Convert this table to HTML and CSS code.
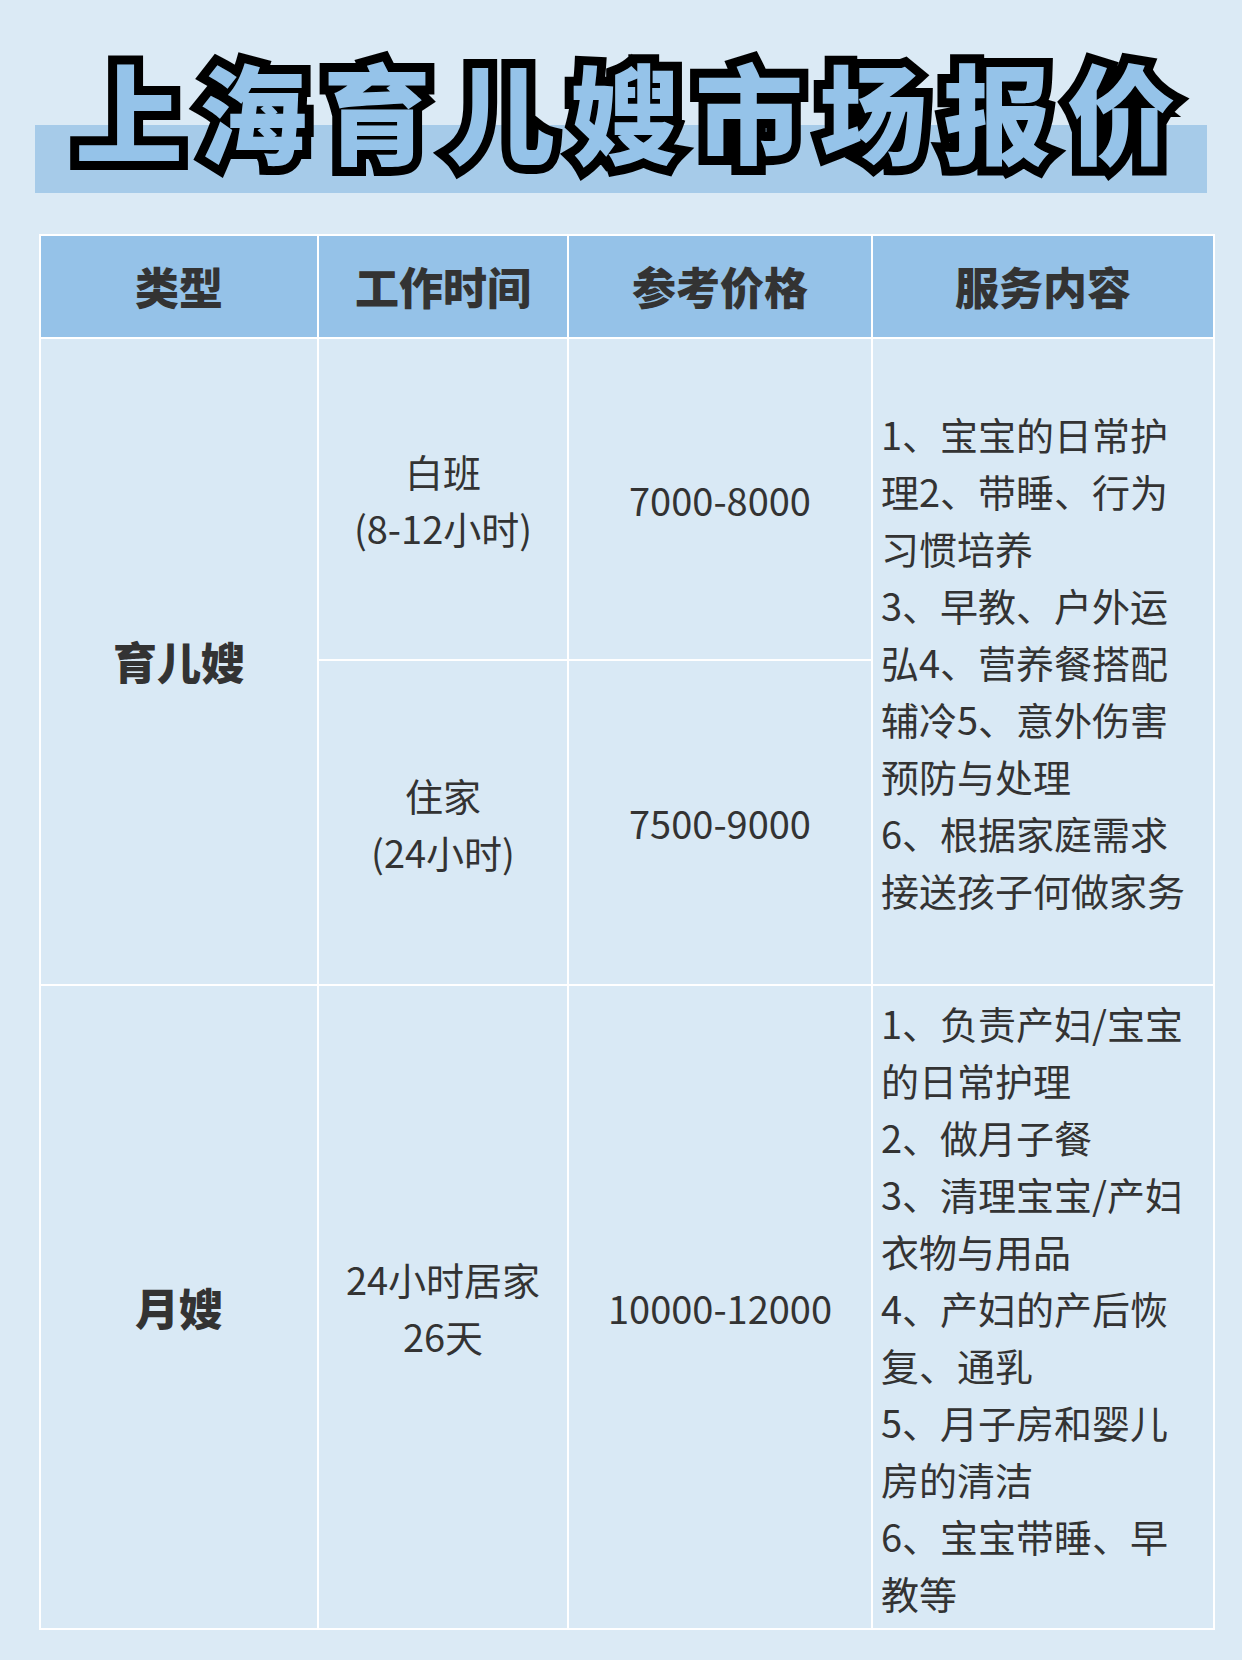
FILE: index.html
```html
<!DOCTYPE html>
<html lang="zh-CN">
<head>
<meta charset="utf-8">
<title>上海育儿嫂市场报价</title>
<link rel="stylesheet" href="styles.css">
</head>
<body>
<div class="page">
  <h1 class="title" data-text="上海育儿嫂市场报价"><span class="title-fill">上海育儿嫂市场报价</span></h1>
  <div class="table">
    <div class="cell head">类型</div>
    <div class="cell head">工作时间</div>
    <div class="cell head">参考价格</div>
    <div class="cell head">服务内容</div>

    <div class="cell type span2">育儿嫂</div>
    <div class="cell">白班<br>(8-12小时)</div>
    <div class="cell">7000-8000</div>
    <div class="cell svc span2">1、宝宝的日常护<br>理2、带睡、行为<br>习惯培养<br>3、早教、户外运<br>弘4、营养餐搭配<br>辅冷5、意外伤害<br>预防与处理<br>6、根据家庭需求<br>接送孩子何做家务</div>
    <div class="cell">住家<br>(24小时)</div>
    <div class="cell">7500-9000</div>

    <div class="cell type">月嫂</div>
    <div class="cell">24小时居家<br>26天</div>
    <div class="cell">10000-12000</div>
    <div class="cell svc">1、负责产妇/宝宝<br>的日常护理<br>2、做月子餐<br>3、清理宝宝/产妇<br>衣物与用品<br>4、产妇的产后恢<br>复、通乳<br>5、月子房和婴儿<br>房的清洁<br>6、宝宝带睡、早<br>教等</div>
  </div>
</div>
</body>
</html>
```
FILE: styles.css
```css
html, body {
  margin: 0;
  padding: 0;
}
body {
  background: #dbeaf5;
  width: 1242px;
  height: 1660px;
  overflow: hidden;
  font-family: "Noto Sans CJK SC", "Noto Sans", sans-serif;
  color: #333333;
}
.page {
  display: flex;
  flex-direction: column;
  padding-top: 34px;
}
.title {
  margin: 0 35px;
  height: 159px;
  display: grid;
  justify-items: center;
  align-items: start;
  font-size: 108px;
  font-weight: 900;
  line-height: 150px;
  letter-spacing: 16px;
  padding-left: 24px;
  background: linear-gradient(to bottom, transparent 0, transparent 91px, #a6cbe9 91px, #a6cbe9 159px);
}
.title::before {
  content: attr(data-text);
  grid-area: 1 / 1;
  color: #000;
  -webkit-text-stroke: 18px #000;
  text-shadow: -4px 4px 0 #000;
}
.title-fill {
  grid-area: 1 / 1;
  color: #95c3e9;
}
.table {
  margin: 41px 0 0 39px;
  width: 1176px;
  box-sizing: border-box;
  display: grid;
  grid-template-columns: 276px 248px 302px 340px;
  grid-template-rows: 101px 320px 323px 642px;
  gap: 2px;
  padding: 2px;
  background: #ffffff;
}
.cell {
  background: #d9e9f5;
  display: flex;
  align-items: center;
  justify-content: center;
  text-align: center;
  font-size: 38px;
  line-height: 57px;
  white-space: nowrap;
}
.head {
  background: #95c2e8;
  font-size: 44px;
  font-weight: 900;
}
.type {
  font-size: 44px;
  font-weight: 900;
}
.span2 {
  grid-row: span 2;
}
.svc {
  justify-content: flex-start;
  text-align: left;
  padding-left: 8px;
}
```
